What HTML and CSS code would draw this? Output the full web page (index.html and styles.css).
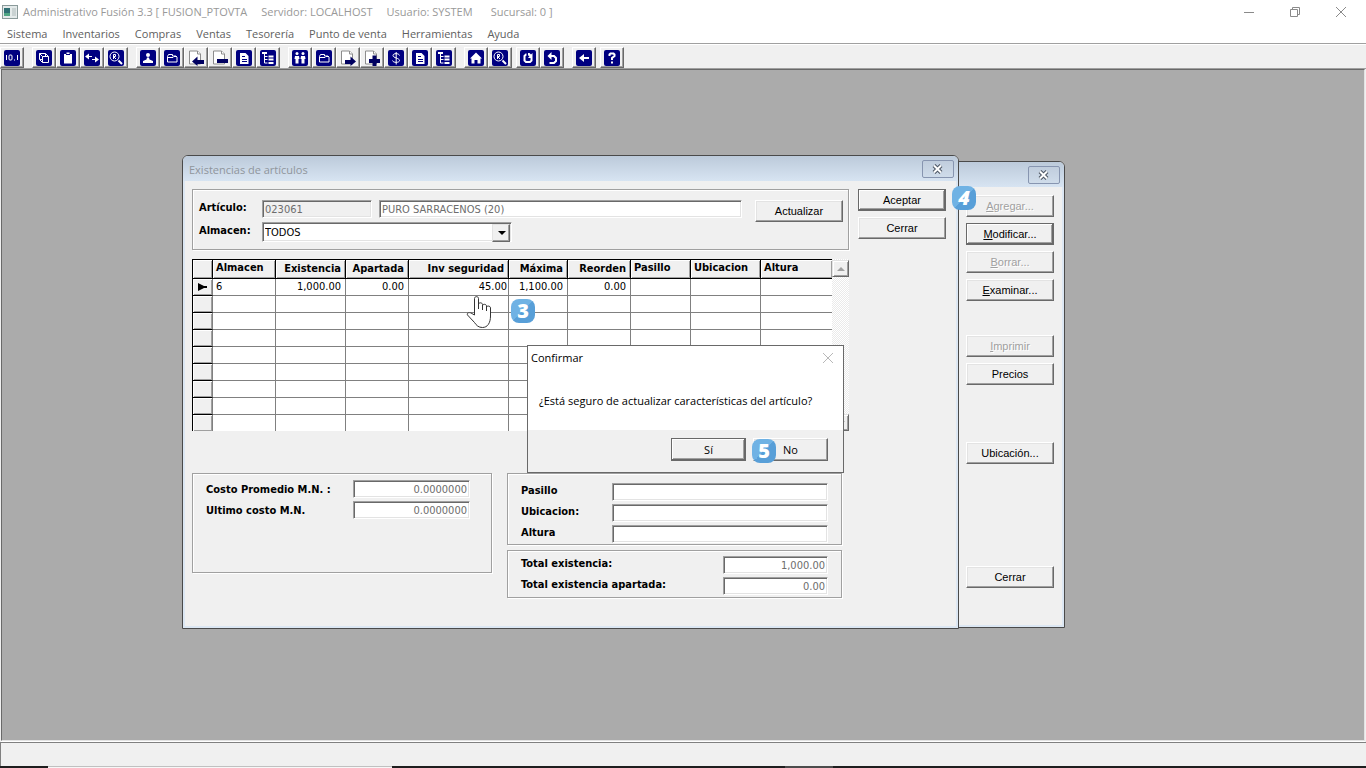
FILE: index.html
```html
<!DOCTYPE html>
<html lang="es">
<head>
    <meta charset="UTF-8">
    <meta name="viewport" content="width=device-width, initial-scale=1.0">
    <title>Administrativo Fusión 3.3</title>
    <link rel="stylesheet" href="styles.css">
</head>
<body>
    <!-- Toolbar icons -->
    <svg class="defs" width="0" height="0" aria-hidden="true">
        <symbol id="i-num" viewBox="0 0 16 16"><path d="M2.500 5v5M13.500 5v5" /><rect x="5" y="5" width="3" height="5" rx="1" /><path d="M10 10h1" /></symbol>
        <symbol id="i-cube" viewBox="0 0 16 16"><path d="M3.500 3.500h6l3 3v6h-6l-3-3zM6.500 6.500h6M6.500 6.500v6M3.500 3.500l3 3M9.500 3.500v3M4 9.500h2.500" /></symbol>
        <symbol id="i-clip" viewBox="0 0 16 16"><path class="fill" d="M4 4h2.500V2.500h3V4H12v9.500H4z" /><path class="dark" d="M6 4.500h4" /></symbol>
        <symbol id="i-swap" viewBox="0 0 16 16"><path d="M2 6.500h6M8 9.500h6" /><path class="fill" d="M1 6.500L5 3.500v6zM15 9.500L11 6.500v6z" /></symbol>
        <symbol id="i-find" viewBox="0 0 16 16"><circle cx="6.500" cy="6.500" r="4.500" /><path d="M5.500 9V4.500h2v2h-2l2.500 2.500" /><path class="thick" d="M10.500 10.500l3.500 3.500" /></symbol>
        <symbol id="i-user" viewBox="0 0 16 16"><circle class="fill" cx="8" cy="5" r="2" /><path class="fill" d="M3 13v-2l3.500-1.500L7 7.500h2l.5 2L13 11v2z" /></symbol>
        <symbol id="i-folder" viewBox="0 0 16 16"><path d="M3.500 12V6.500l1-2h4V6H12l1 1v5zM4 7.500h5l1-1h2" /></symbol>
        <symbol id="i-page" viewBox="0 0 16 16"><path class="fill" d="M4 3h5.500L12.500 6v8H4z" /><path class="dark" d="M6 6.500h3M6 9.500h5M6 11.500h5" /></symbol>
        <symbol id="i-tree" viewBox="0 0 16 16"><path d="M4.500 3v10M4.500 6.500h3M4.500 9.500h3M4.500 13h3" /><path class="thick" d="M2 3h5M8.500 6.500h5M8.500 9.500h5M8.500 13h5" /></symbol>
        <symbol id="i-couple" viewBox="0 0 16 16"><circle class="fill" cx="5" cy="3.500" r="1.500" /><circle class="fill" cx="11" cy="3.500" r="1.500" /><path class="fill" d="M3 6h4l.5 3H6.500v4.500h-3V9h-1zM9 6h4l.5 3h-1v4.500h-3V9h-1z" /></symbol>
        <symbol id="i-dollar" viewBox="0 0 16 16"><path d="M11.500 5.500C11 3 5 3 5 5.500S11.500 8 11.500 10.500 5 13 4.500 10.500M8.200 2v12.500" /></symbol>
        <symbol id="i-home" viewBox="0 0 16 16"><path class="fill" d="M8 2.500L14 8.500h-1.500V13.500h-3V10h-3v3.500h-3V8.500H2z" /></symbol>
        <symbol id="i-redo" viewBox="0 0 16 16"><path class="thick" d="M6.500 4.500H6L4.500 6v4.500L6 12h4l1.500-1.500V8" /><path class="fill" d="M8 3h1.500L11 4.500 12.500 3v5H8l1.500-2L8 5.500z" /></symbol>
        <symbol id="i-undo" viewBox="0 0 16 16"><path class="thick" d="M5 6h5l2 2v3l-2 2H5.500" /><path class="fill" d="M7.500 2v8L3.500 6z" /></symbol>
        <symbol id="i-back" viewBox="0 0 16 16"><path class="thick" d="M6 8h7" /><path class="fill" d="M3 8l5-4v8z" /></symbol>
        <symbol id="i-help" viewBox="0 0 16 16"><path class="thick" d="M5.500 6V4.500l1-1h3l1 1V6L8 8v2M8 11.500v2" /></symbol>
        <symbol id="i-in" viewBox="0 0 16 16"><path class="sheet" d="M1.500 1h8l3 3v10h-11z" /><path class="sheet" d="M9.500 1v3h3" /><path class="arrow" d="M4 11.500L9.500 6.500V10H16v4H9.500v2z" /></symbol>
        <symbol id="i-minus" viewBox="0 0 16 16"><path class="sheet" d="M1.500 1h8l3 3v10h-11z" /><path class="sheet" d="M9.500 1v3h3" /><path class="arrow" d="M5 9h11v4H5z" /></symbol>
        <symbol id="i-out" viewBox="0 0 16 16"><path class="sheet" d="M1.500 1h8l3 3v10h-11z" /><path class="sheet" d="M9.500 1v3h3" /><path class="arrow" d="M16 11.500L10.500 6.500V10H5v4h5.500v2z" /></symbol>
        <symbol id="i-plus" viewBox="0 0 16 16"><path class="sheet" d="M1.500 1h8l3 3v10h-11z" /><path class="sheet" d="M9.500 1v3h3" /><path class="arrow" d="M5 9h3.500V5.500h4V9H16v4h-3.500v3h-4v-3H5z" /></symbol>
        <symbol id="i-x" viewBox="0 0 13 12"><path class="x-out" d="M3 2.500l7 7M10 2.500l-7 7" /><path class="x-in" d="M3 2.500l7 7M10 2.500l-7 7" /></symbol>
    </svg>

    <header class="titlebar">
        <svg class="app-icon" viewBox="0 0 16 14"><rect x="0.500" y="0.500" width="15" height="13" fill="#e4eaea" stroke="#8a9a9a" /><rect x="2" y="3" width="6" height="8" fill="#2f6f73" /><rect x="2" y="8" width="6" height="3" fill="#4fa583" /><rect x="10" y="3" width="4" height="8" fill="#c9d2d2" /></svg>
        <div class="app-title"><span>Administrativo Fusión 3.3 [ FUSION_PTOVTA</span><span>Servidor: LOCALHOST</span><span>Usuario: SYSTEM</span><span class="wide">Sucursal: 0 ]</span></div>
        <div class="win-controls">
            <button aria-label="Minimizar"><svg viewBox="0 0 12 12"><path d="M1 6.500h10" /></svg></button>
            <button aria-label="Restaurar"><svg viewBox="0 0 12 12"><path d="M1.500 3.500h7v7h-7zM3.500 3.500v-2h7v7h-2" /></svg></button>
            <button aria-label="Cerrar"><svg viewBox="0 0 12 12"><path d="M1 1l10 10M11 1L1 11" /></svg></button>
        </div>
    </header>

    <nav class="menubar">
        <a href="#">Sistema</a>
        <a href="#">Inventarios</a>
        <a href="#">Compras</a>
        <a href="#">Ventas</a>
        <a href="#">Tesorería</a>
        <a href="#">Punto de venta</a>
        <a href="#">Herramientas</a>
        <a href="#">Ayuda</a>
    </nav>

    <div class="toolbar">
        <div class="tools"><button aria-label="Números"><svg class="tile"><use href="#i-num" /></svg></button></div>
        <div class="tools">
            <button aria-label="Artículos"><svg class="tile"><use href="#i-cube" /></svg></button>
            <button aria-label="Pedidos"><svg class="tile"><use href="#i-clip" /></svg></button>
            <button aria-label="Traspasos"><svg class="tile"><use href="#i-swap" /></svg></button>
            <button aria-label="Buscar"><svg class="tile"><use href="#i-find" /></svg></button>
        </div>
        <div class="tools">
            <button aria-label="Proveedores"><svg class="tile"><use href="#i-user" /></svg></button>
            <button aria-label="Carpeta"><svg class="tile"><use href="#i-folder" /></svg></button>
            <button aria-label="Entrada"><svg><use href="#i-in" /></svg></button>
            <button aria-label="Quitar"><svg><use href="#i-minus" /></svg></button>
            <button aria-label="Documento"><svg class="tile"><use href="#i-page" /></svg></button>
            <button aria-label="Árbol"><svg class="tile"><use href="#i-tree" /></svg></button>
        </div>
        <div class="tools">
            <button aria-label="Clientes"><svg class="tile"><use href="#i-couple" /></svg></button>
            <button aria-label="Carpeta"><svg class="tile"><use href="#i-folder" /></svg></button>
            <button aria-label="Salida"><svg><use href="#i-out" /></svg></button>
            <button aria-label="Añadir"><svg><use href="#i-plus" /></svg></button>
            <button aria-label="Cobros"><svg class="tile"><use href="#i-dollar" /></svg></button>
            <button aria-label="Documento"><svg class="tile"><use href="#i-page" /></svg></button>
            <button aria-label="Árbol"><svg class="tile"><use href="#i-tree" /></svg></button>
        </div>
        <div class="tools">
            <button aria-label="Inicio"><svg class="tile"><use href="#i-home" /></svg></button>
            <button aria-label="Buscar"><svg class="tile"><use href="#i-find" /></svg></button>
        </div>
        <div class="tools near">
            <button aria-label="Rehacer"><svg class="tile"><use href="#i-redo" /></svg></button>
            <button aria-label="Deshacer"><svg class="tile"><use href="#i-undo" /></svg></button>
        </div>
        <div class="tools"><button aria-label="Salir"><svg class="tile"><use href="#i-back" /></svg></button></div>
        <div class="tools near"><button aria-label="Ayuda"><svg class="tile"><use href="#i-help" /></svg></button></div>
    </div>

    <main class="desktop">
        <!-- Window behind -->
        <section class="window articles">
            <div class="caption"><span></span><button class="close" aria-label="Cerrar"><svg><use href="#i-x" /></svg></button></div>
            <div class="client side">
                <button class="btn" disabled><u>A</u>gregar...</button>
                <button class="btn default"><u>M</u>odificar...</button>
                <button class="btn" disabled><u>B</u>orrar...</button>
                <button class="btn"><u>E</u>xaminar...</button>
                <button class="btn print" disabled><u>I</u>mprimir</button>
                <button class="btn">Precios</button>
                <button class="btn place">Ubicación...</button>
                <button class="btn exit">Cerrar</button>
            </div>
        </section>

        <!-- Stock window -->
        <section class="window stock">
            <div class="caption"><span>Existencias de artículos</span><button class="close" aria-label="Cerrar"><svg><use href="#i-x" /></svg></button></div>
            <div class="client">
                <div class="content">
                    <div class="group filter">
                        <div class="filter-fields">
                            <div class="field">
                                <label for="articulo">Artículo:</label>
                                <input id="articulo" class="code" value="023061" readonly>
                                <input class="name" aria-label="Descripción" value="PURO SARRACENOS (20)" readonly>
                            </div>
                            <div class="field">
                                <label for="almacen">Almacen:</label>
                                <span class="combo"><select id="almacen"><option>TODOS</option></select></span>
                            </div>
                        </div>
                        <button class="btn">Actualizar</button>
                    </div>

                    <div class="grid">
                        <table>
                            <colgroup>
                                <col class="c-mark"><col class="c-63"><col class="c-70"><col class="c-63"><col class="c-100"><col class="c-59"><col class="c-63"><col class="c-60"><col class="c-70"><col>
                            </colgroup>
                            <thead>
                                <tr><th></th><th>Almacen</th><th class="num">Existencia</th><th class="num">Apartada</th><th class="num">Inv seguridad</th><th class="num">Máxima</th><th class="num">Reorden</th><th>Pasillo</th><th>Ubicacion</th><th>Altura</th></tr>
                            </thead>
                            <tbody>
                                <tr><th><svg class="marker" viewBox="0 0 9 8"><path d="M0 0l6 3h3v2H6L0 8z" /></svg></th><td>6</td><td class="num">1,000.00</td><td class="num">0.00</td><td class="num edge">45.00</td><td class="num">1,100.00</td><td class="num">0.00</td><td></td><td></td><td></td></tr>
                                <tr><th></th><td></td><td></td><td></td><td></td><td></td><td></td><td></td><td></td><td></td></tr>
                                <tr><th></th><td></td><td></td><td></td><td></td><td></td><td></td><td></td><td></td><td></td></tr>
                                <tr><th></th><td></td><td></td><td></td><td></td><td></td><td></td><td></td><td></td><td></td></tr>
                                <tr><th></th><td></td><td></td><td></td><td></td><td></td><td></td><td></td><td></td><td></td></tr>
                                <tr><th></th><td></td><td></td><td></td><td></td><td></td><td></td><td></td><td></td><td></td></tr>
                                <tr><th></th><td></td><td></td><td></td><td></td><td></td><td></td><td></td><td></td><td></td></tr>
                                <tr><th></th><td></td><td></td><td></td><td></td><td></td><td></td><td></td><td></td><td></td></tr>
                                <tr><th></th><td></td><td></td><td></td><td></td><td></td><td></td><td></td><td></td><td></td></tr>
                            </tbody>
                        </table>
                        <div class="scrollbar">
                            <button aria-label="Subir" disabled><svg viewBox="0 0 8 4"><path d="M0 4l4-4 4 4z" /></svg></button>
                            <button aria-label="Bajar" disabled><svg viewBox="0 0 8 4"><path d="M0 0l4 4 4-4z" /></svg></button>
                        </div>
                    </div>

                    <div class="details">
                        <div class="group costs">
                            <div class="field"><label for="costo-prom">Costo Promedio M.N. :</label><input id="costo-prom" class="num" value="0.0000000" readonly></div>
                            <div class="field"><label for="costo-ult">Ultimo costo M.N.</label><input id="costo-ult" class="num" value="0.0000000" readonly></div>
                        </div>
                        <div class="right">
                            <div class="group location">
                                <div class="field"><label for="pasillo">Pasillo</label><input id="pasillo"></div>
                                <div class="field"><label for="ubicacion">Ubicacion:</label><input id="ubicacion"></div>
                                <div class="field"><label for="altura">Altura</label><input id="altura"></div>
                            </div>
                            <div class="group totals">
                                <div class="field"><label for="total">Total existencia:</label><input id="total" class="num" value="1,000.00" readonly></div>
                                <div class="field"><label for="total-ap">Total existencia apartada:</label><input id="total-ap" class="num" value="0.00" readonly></div>
                            </div>
                        </div>
                    </div>
                </div>
                <div class="actions">
                    <button class="btn default">Aceptar</button>
                    <button class="btn">Cerrar</button>
                </div>
            </div>
        </section>

        <!-- Confirm dialog -->
        <section class="dialog" role="dialog" aria-labelledby="dlg-title">
            <div class="dialog-title"><span id="dlg-title">Confirmar</span><button aria-label="Cerrar"><svg viewBox="0 0 12 12"><path d="M1 1l10 10M11 1L1 11" /></svg></button></div>
            <p>¿Está seguro de actualizar características del artículo?</p>
            <div class="dialog-buttons">
                <button class="btn default">Sí</button>
                <button class="btn">No</button>
            </div>
        </section>

        <span class="step step-3">3</span>
        <span class="step step-4">4</span>
        <span class="step step-5">5</span>
        <svg class="hand" viewBox="0 0 26 34"><path d="M8.500 20V3.500C8.500 1 12.500 1 12.500 3.500V14v-4.500C12.500 7 16.500 7.500 16.500 9.500V15v-4C16.500 8.500 20.500 9 20.500 11v5-3.500c0-2 4-2 4 .5V21c0 7-3 11.500-8 11.500-4 0-6-2-8-5L1.500 20C.5 18 3 17 5 18z" /></svg>
    </main>

    <footer class="statusbar"></footer>
    <div class="taskbar"><span class="task"></span><span class="mark"></span></div>
</body>
</html>
```
FILE: styles.css
```css
* {
    box-sizing: border-box;
}

body {
    margin: 0;
    height: 100vh;
    display: flex;
    flex-direction: column;
    overflow: hidden;
    background-color: #f0f0f0;
    font-family: "DejaVu Sans Condensed", "DejaVu Sans", sans-serif;
    font-size: 11px;
    color: #000;
}

button, input, select {
    font: inherit;
    color: inherit;
    margin: 0;
    padding: 0;
    border: none;
    border-radius: 0;
    background: none;
    outline: none;
}

.defs {
    position: absolute;
}

/* Title and menu */
.titlebar {
    display: flex;
    align-items: center;
    height: 23px;
    padding-left: 2px;
    background-color: #fff;
    color: #999;
    font-family: "Open Sans", sans-serif;
    font-size: 11px;
}

.app-icon {
    width: 16px;
    height: 14px;
    margin-right: 5px;
}

.app-title {
    flex: 1;
    display: flex;
    gap: 14px;
    white-space: nowrap;
}

.app-title .wide {
    margin-left: 4px;
}

.win-controls button {
    width: 46px;
    height: 20px;
}

.win-controls {
    display: flex;
    padding-right: 2px;
}

.win-controls svg, .dialog-title svg {
    display: block;
    width: 12px;
    height: 12px;
    margin: auto;
    fill: none;
    stroke: #8a8a8a;
}

.menubar {
    display: flex;
    align-items: center;
    gap: 15px;
    height: 20px;
    padding-left: 7px;
    background-color: #fff;
    font-family: "Open Sans", sans-serif;
    font-size: 11px;
}

.menubar a {
    color: #606060;
    text-decoration: none;
    white-space: nowrap;
}

/* Toolbar */
.toolbar {
    display: flex;
    gap: 8px;
    height: 26px;
    padding-top: 3px;
    border-top: 1px solid #a0a0a0;
    border-bottom: 1px solid #a0a0a0;
    box-shadow: inset 0 1px #fff;
}

.tools {
    display: flex;
}

.tools.near {
    margin-left: -4px;
}

.tools button {
    width: 24px;
    height: 21px;
    padding-left: 3px;
    border: 1px solid;
    border-color: #fff #696969 #696969 #fff;
    box-shadow: inset -1px -1px #a0a0a0;
}

.tools svg {
    display: block;
    width: 16px;
    height: 16px;
    fill: none;
    stroke: #fff;
}

.tools .tile {
    background-color: #000080;
    border-radius: 2px;
}

.fill {
    fill: #fff;
    stroke: none;
}

.dark {
    stroke: #000080;
}

.thick {
    stroke-width: 2;
}

.sheet {
    fill: #fff;
    stroke: #8c8c8c;
}

.arrow {
    fill: #000060;
    stroke: none;
}

/* Work area */
.desktop {
    position: relative;
    flex: 1;
    margin: 0 1px;
    background-color: #ababab;
    border: 1px solid;
    border-color: #696969 #e3e3e3 #e3e3e3 #696969;
    box-shadow: 0 1px #fff;
}

.window {
    position: absolute;
    display: flex;
    flex-direction: column;
    border: 1px solid #4a4a4a;
    border-radius: 6px 6px 0 0;
    background-color: #f0f0f0;
}

.stock {
    left: 180px;
    top: 85px;
    width: 777px;
    height: 474px;
}

.articles {
    left: 240px;
    top: 91px;
    width: 823px;
    height: 467px;
}

.caption {
    display: flex;
    justify-content: space-between;
    height: 25px;
    padding-left: 6px;
    padding-right: 4px;
    border-radius: 5px 5px 0 0;
    background: linear-gradient(#bccada, #d7e4f2);
    color: #8f959c;
    font-family: "Open Sans", sans-serif;
    font-size: 11px;
    line-height: 27px;
}

.close {
    width: 32px;
    height: 18px;
    margin-top: 4px;
    border: 1px solid #8795b0;
    border-radius: 2px;
    background: linear-gradient(#c0cddd, #cfdcea);
}

.close svg {
    display: block;
    width: 13px;
    height: 12px;
    margin: 0 auto 1px 8px;
    fill: none;
}

.x-out {
    stroke: #4c5664;
    stroke-width: 4;
}

.x-in {
    stroke: #fff;
    stroke-width: 2;
}

.client {
    flex: 1;
    display: flex;
    gap: 9px;
    padding: 8px 10px 0 7px;
    border: 2px solid #dce7f3;
    border-top: none;
}

.client.side {
    flex-direction: column;
    align-items: flex-end;
    gap: 6px;
    padding-right: 8px;
}

.print {
    margin-top: 28px;
}

.place {
    margin-top: 51px;
}

.exit {
    margin-top: 96px;
}

.btn {
    width: 88px;
    height: 22px;
    flex: none;
    border: 1px solid;
    border-color: #fff #696969 #696969 #fff;
    box-shadow: inset -1px -1px #a0a0a0, inset 1px 1px #e3e3e3;
    background-color: #f0f0f0;
    font-family: "Liberation Sans", sans-serif;
    font-size: 11px;
}

.btn.default {
    border-color: #696969;
    box-shadow: inset -1px -1px #696969, inset 1px 1px #fff, inset -2px -2px #a0a0a0;
}

.btn:disabled {
    color: #a0a0a0;
    text-shadow: 1px 1px #fff;
}

.content {
    flex: 1;
}

.actions {
    display: flex;
    flex-direction: column;
    gap: 6px;
}

.group {
    border: 1px solid #a0a0a0;
    box-shadow: inset 1px 1px #fff, 1px 1px #fff;
}

.field {
    display: flex;
    align-items: center;
    height: 18px;
}

label {
    font-weight: bold;
    white-space: nowrap;
}

input {
    height: 18px;
    padding: 0 2px;
    border: 1px solid;
    border-color: #a0a0a0 #fff #fff #a0a0a0;
    box-shadow: inset 1px 1px #696969, inset -1px -1px #e3e3e3;
    background-color: #fff;
}

input:read-only {
    color: #6d6d6d;
}

.filter {
    display: flex;
    justify-content: space-between;
    height: 61px;
    padding: 10px 5px 0 6px;
}

.filter-fields {
    display: flex;
    flex-direction: column;
    gap: 5px;
}

.filter label {
    width: 63px;
    flex: none;
    margin-top: -4px;
}

.filter .code {
    width: 110px;
    margin-right: 7px;
    background-color: #f0f0f0;
}

.filter .name {
    width: 363px;
}

.combo {
    position: relative;
    flex: none;
    width: 250px;
    height: 20px;
    border: 1px solid;
    border-color: #a0a0a0 #fff #fff #a0a0a0;
    box-shadow: inset 1px 1px #696969, inset -1px -1px #e3e3e3;
    background-color: #fff;
}

.combo select {
    width: 100%;
    height: 18px;
    padding-left: 2px;
    appearance: none;
}

.combo::before {
    content: "";
    position: absolute;
    right: 1px;
    top: 1px;
    width: 16px;
    height: 16px;
    background-color: #f0f0f0;
    border: 1px solid;
    border-color: #e3e3e3 #696969 #696969 #e3e3e3;
    box-shadow: inset -1px -1px #a0a0a0;
    pointer-events: none;
}

.combo::after {
    content: "";
    position: absolute;
    right: 5px;
    top: 8px;
    border: 4px solid transparent;
    border-top-color: #000;
    border-bottom: none;
    pointer-events: none;
}

/* Stock table */
.grid {
    display: flex;
    height: 172px;
    margin-top: 9px;
    overflow: hidden;
}

table {
    width: 640px;
    height: 173px;
    table-layout: fixed;
    border-collapse: separate;
    border-spacing: 0;
    border-left: 1px solid #000;
    border-top: 1px solid #000;
    background-color: #fff;
}

.c-mark { width: 20px; }
.c-59 { width: 59px; }
.c-60 { width: 60px; }
.c-63 { width: 63px; }
.c-70 { width: 70px; }
.c-100 { width: 100px; }

th, td {
    height: 17px;
    padding: 0 3px;
    line-height: 16px;
    text-align: left;
    white-space: nowrap;
    vertical-align: top;
    border-right: 1px solid #808080;
    border-bottom: 1px solid #808080;
}

th {
    border-color: #000;
    background-color: #f0f0f0;
    box-shadow: inset 1px 1px #fff, inset -1px -1px #a0a0a0;
}

thead th {
    height: 19px;
}

thead th.num {
    padding: 1px 4px 0 0;
}

tbody th {
    padding: 4px 0 0 5px;
    line-height: 0;
    border-right-color: #808080;
}

th:last-child, td:last-child {
    border-right: none;
}

.num {
    text-align: right;
}

td.num {
    padding-right: 4px;
}

td.num.edge {
    padding-right: 1px;
}

.marker {
    width: 9px;
    height: 8px;
    vertical-align: top;
}

.scrollbar {
    flex: 1;
    display: flex;
    flex-direction: column;
    justify-content: space-between;
    padding-top: 1px;
    background: repeating-conic-gradient(#fff 0 25%, #eaeaea 0 50%) 0 0 / 2px 2px;
}

.scrollbar button {
    height: 17px;
    border: 1px solid;
    border-color: #e3e3e3 #696969 #696969 #e3e3e3;
    box-shadow: inset 1px 1px #fff, inset -1px -1px #a0a0a0;
    background-color: #f0f0f0;
}

.scrollbar svg {
    display: block;
    width: 8px;
    height: 4px;
    margin: auto;
    fill: #a0a0a0;
}

/* Lower groups */
.details {
    display: flex;
    gap: 15px;
    margin-top: 42px;
    padding-right: 7px;
}

.details .field {
    justify-content: space-between;
    margin-bottom: 3px;
}

.costs {
    width: 300px;
    height: 100px;
    padding: 6px 21px 0 13px;
}

.costs input {
    width: 117px;
}

.right {
    flex: 1;
}

.location {
    height: 72px;
    padding: 9px 13px 0;
}

.location input {
    width: 216px;
}

.totals {
    height: 48px;
    margin-top: 5px;
    padding: 5px 13px 0;
}

.totals input {
    width: 105px;
}

.right label {
    margin-top: -4px;
}

/* Confirm dialog */
.dialog {
    position: absolute;
    left: 525px;
    top: 275px;
    width: 317px;
    height: 128px;
    display: flex;
    flex-direction: column;
    border: 1px solid #696969;
    background-color: #fff;
}

.dialog-title {
    display: flex;
    justify-content: space-between;
    align-items: center;
    height: 23px;
    padding: 0 9px 0 3px;
}

.dialog-title span {
    font-family: "Open Sans", sans-serif;
}

.dialog-title svg {
    stroke: #b8b8b8;
}

.dialog p {
    flex: 1;
    margin: 0;
    padding: 24px 0 0 11px;
    line-height: 16px;
    font-family: "Open Sans", sans-serif;
    white-space: nowrap;
}

.dialog-buttons {
    display: flex;
    justify-content: flex-end;
    gap: 7px;
    height: 42px;
    padding: 8px 15px 0 0;
    background-color: #f0f0f0;
}

.dialog .btn {
    width: 75px;
    height: 23px;
    font-family: "Open Sans", sans-serif;
}

/* Step markers */
.step {
    position: absolute;
    width: 24px;
    height: 24px;
    border-radius: 8px;
    background: linear-gradient(135deg, #6fb2e4 50%, #589fd8 50%);
    color: #fff;
    font-family: "Open Sans", sans-serif;
    font-size: 20px;
    font-weight: 800;
    line-height: 24px;
    text-align: center;
}

.step-3 {
    left: 509px;
    top: 229px;
}

.step-4 {
    left: 950px;
    top: 116px;
    font-style: italic;
}

.step-5 {
    left: 750px;
    top: 369px;
}

.hand {
    position: absolute;
    left: 464px;
    top: 225px;
    width: 26px;
    height: 34px;
    fill: #fff;
    stroke: #333;
}

/* Bottom bars */
.statusbar {
    height: 24px;
    margin-top: 1px;
    border-top: 1px solid #808080;
    border-left: 1px solid #808080;
}

.taskbar {
    display: flex;
    height: 2px;
    background-color: #1e1e1e;
}

.task {
    width: 344px;
    margin-left: 48px;
    background-color: #f7f7f7;
    border-top: 1px solid #c0c0c0;
}

.mark {
    width: 48px;
    margin-left: 393px;
    background-color: #4c4c4c;
}
```
